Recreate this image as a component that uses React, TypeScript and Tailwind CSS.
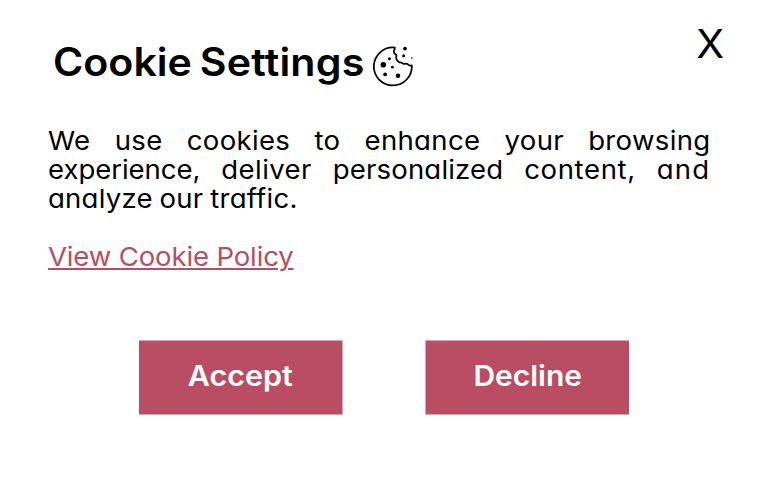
import React from "react";

function CookieIcon() {
  return (
    <svg className="mt-[46px] ml-[9px] h-[41px] w-[41px] shrink-0" viewBox="0 0 41 41" fill="none">
      <path
        d="M21.8 1.6A19 19 0 1 0 38.8 19.4Q37 20 35.6 18.9Q34.3 17.2 32.4 17.6Q29.8 18.4 28.6 16.6Q26.8 16.9 25 15.3Q22.6 13.4 23.3 10.6Q23.8 9.2 22.6 8.3Q20.3 7 21 4.5Q22 3 21.8 1.6Z"
        stroke="black"
        strokeWidth="1.75"
        strokeLinejoin="round"
      />
      <g fill="black">
        <circle cx="32" cy="2.6" r="1.9" />
        <circle cx="30.7" cy="9.7" r="1.5" />
        <circle cx="38.8" cy="12" r="0.8" />
        <circle cx="16.4" cy="12.7" r="1.5" />
        <circle cx="10.3" cy="18.8" r="2.8" />
        <circle cx="19.4" cy="21.2" r="1.4" />
        <circle cx="12.1" cy="28.4" r="1.9" />
        <circle cx="25" cy="29.8" r="2.3" />
      </g>
    </svg>
  );
}

export default function App() {
  return (
    <main className="flex h-[480px] w-[768px] flex-col bg-white font-['Inter',sans-serif] text-black [font-feature-settings:'cv11']">
      <header className="flex h-[126px] items-start pl-[53px]">
        <h1 className="mt-[39px] w-[311px] origin-left scale-x-[1.055] text-[39px] leading-[46px] font-semibold whitespace-nowrap [word-spacing:-2.5px]">
          Cookie <span className="tracking-[0.2px]">Settings</span>
        </h1>
        <CookieIcon />
        <button className="mt-[20px] ml-[283px] text-[39px] leading-[48px]" aria-label="Close">
          <span className="inline-block scale-x-[1.05]">X</span>
        </button>
      </header>
      <section className="ml-[48px] w-[625px] origin-left scale-x-[1.06] text-[26px] leading-[29px]">
        <p>
          <span className="block text-justify tracking-[0.3px] [text-align-last:justify]">We use cookies to enhance your browsing</span>
          <span className="block text-justify [text-align-last:justify]">
            <span className="tracking-[-0.05px]">experience,</span> <span className="tracking-[0.4px]">deliver</span>{" "}
            <span className="tracking-[0.15px]">personalized</span> <span className="tracking-[0.6px]">content,</span>{" "}
            <span className="tracking-[1.2px]">and</span>
          </span>
          <span className="block tracking-[0.2px] [word-spacing:-1px]">analyze our traffic.</span>
        </p>
        <a href="#" className="mt-[29px] block tracking-[-0.15px] text-[#b84d63] underline decoration-2 underline-offset-[2px]">
          View Cookie Policy
        </a>
      </section>
      <div className="mt-[69px] ml-[139px] flex gap-[82px] text-[28px] font-semibold text-white">
        <button className="h-[75px] w-[204px] border-y border-r border-[#dca6b1] bg-[#b84d63] pb-[3px]">
          <span className="inline-block scale-x-[1.09]">Accept</span>
        </button>
        <button className="h-[75px] w-[204px] border-y border-l border-[#dca6b1] bg-[#b84d63] pb-[3px]">
          <span className="inline-block scale-x-[1.07]">Decline</span>
        </button>
      </div>
    </main>
  );
}
